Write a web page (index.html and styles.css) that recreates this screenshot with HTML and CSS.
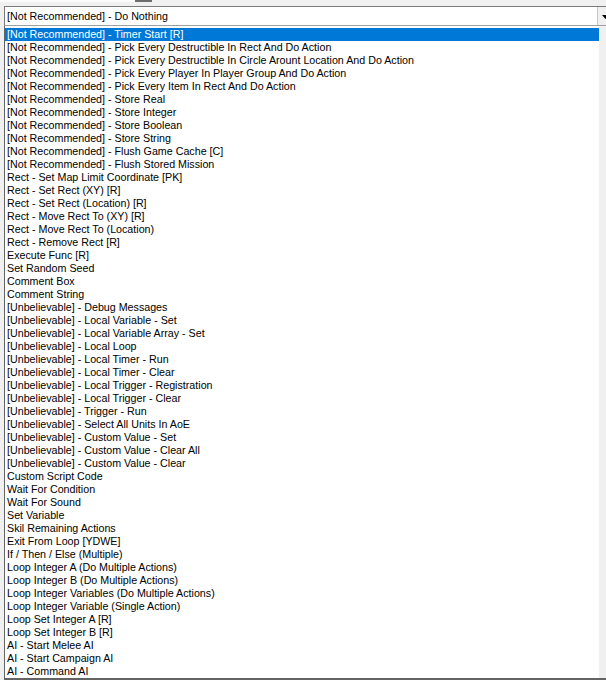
FILE: index.html
```html
<!DOCTYPE html>
<html>
<head>
<meta charset="utf-8">
<link rel="stylesheet" href="styles.css">
</head>
<body>
<div class="topstrip"><div class="strip-light"></div><div class="strip-dark"></div></div>
<div class="frame">
  <div class="combo">
    <div class="combo-text">[Not Recommended] - Do Nothing</div>
    <div class="combo-btn"><svg width="7" height="4" viewBox="0 0 7 4"><path d="M0 0H7L3.5 4Z" fill="#000"/></svg></div>
  </div>
  <div class="listbox">
    <div class="items">
      <div class="item sel">[Not Recommended] - Timer Start [R]</div>
      <div class="item">[Not Recommended] - Pick Every Destructible In Rect And Do Action</div>
      <div class="item">[Not Recommended] - Pick Every Destructible In Circle Arount Location And Do Action</div>
      <div class="item">[Not Recommended] - Pick Every Player In Player Group And Do Action</div>
      <div class="item">[Not Recommended] - Pick Every Item In Rect And Do Action</div>
      <div class="item">[Not Recommended] - Store Real</div>
      <div class="item">[Not Recommended] - Store Integer</div>
      <div class="item">[Not Recommended] - Store Boolean</div>
      <div class="item">[Not Recommended] - Store String</div>
      <div class="item">[Not Recommended] - Flush Game Cache [C]</div>
      <div class="item">[Not Recommended] - Flush Stored Mission</div>
      <div class="item">Rect - Set Map Limit Coordinate [PK]</div>
      <div class="item">Rect - Set Rect (XY) [R]</div>
      <div class="item">Rect - Set Rect (Location) [R]</div>
      <div class="item">Rect - Move Rect To (XY) [R]</div>
      <div class="item">Rect - Move Rect To (Location)</div>
      <div class="item">Rect - Remove Rect [R]</div>
      <div class="item">Execute Func [R]</div>
      <div class="item">Set Random Seed</div>
      <div class="item">Comment Box</div>
      <div class="item">Comment String</div>
      <div class="item">[Unbelievable] - Debug Messages</div>
      <div class="item">[Unbelievable] - Local Variable - Set</div>
      <div class="item">[Unbelievable] - Local Variable Array - Set</div>
      <div class="item">[Unbelievable] - Local Loop</div>
      <div class="item">[Unbelievable] - Local Timer - Run</div>
      <div class="item">[Unbelievable] - Local Timer - Clear</div>
      <div class="item">[Unbelievable] - Local Trigger - Registration</div>
      <div class="item">[Unbelievable] - Local Trigger - Clear</div>
      <div class="item">[Unbelievable] - Trigger - Run</div>
      <div class="item">[Unbelievable] - Select All Units In AoE</div>
      <div class="item">[Unbelievable] - Custom Value - Set</div>
      <div class="item">[Unbelievable] - Custom Value - Clear All</div>
      <div class="item">[Unbelievable] - Custom Value - Clear</div>
      <div class="item">Custom Script Code</div>
      <div class="item">Wait For Condition</div>
      <div class="item">Wait For Sound</div>
      <div class="item">Set Variable</div>
      <div class="item">Skil Remaining Actions</div>
      <div class="item">Exit From Loop [YDWE]</div>
      <div class="item">If / Then / Else (Multiple)</div>
      <div class="item">Loop Integer A (Do Multiple Actions)</div>
      <div class="item">Loop Integer B (Do Multiple Actions)</div>
      <div class="item">Loop Integer Variables (Do Multiple Actions)</div>
      <div class="item">Loop Integer Variable (Single Action)</div>
      <div class="item">Loop Set Integer A [R]</div>
      <div class="item">Loop Set Integer B [R]</div>
      <div class="item">AI - Start Melee AI</div>
      <div class="item">AI - Start Campaign AI</div>
      <div class="item">AI - Command AI</div>
    </div>
    <div class="scrollbar"></div>
  </div>
</div>
</body>
</html>
```

FILE: styles.css
```css
html, body {
  margin: 0;
  padding: 0;
}
body {
  width: 606px;
  height: 680px;
  overflow: hidden;
  background: #f0f0f0;
  font-family: "Liberation Sans", Arial, sans-serif;
  font-size: 10.7px;
  color: #000;
}
.topstrip {
  display: flex;
  height: 2px;
}
.strip-light {
  width: 135px;
  background: #fbfbfb;
}
.strip-dark {
  width: 17px;
  background: #6d6d6d;
}
.frame {
  padding: 4px 0 0 4px;
  width: 620px;
}
.combo {
  display: flex;
  height: 18px;
  border: 1px solid #7a7a7a;
  border-bottom-color: #a0a0a0;
  background: #fff;
  width: 612px;
}
.combo-text {
  width: 590px;
  padding-left: 2px;
  line-height: 19px;
}
.combo-btn {
  width: 17px;
  border-left: 1px solid #c8c8c8;
  background: #f0f0f0;
  display: flex;
  align-items: center;
  padding-left: 4px;
  padding-top: 1px;
  box-sizing: border-box;
}
.combo-btn svg {
  display: block;
}
.listbox {
  display: flex;
  border-left: 1px solid #646464;
  border-bottom: 2px solid #646464;
  background: #fff;
  width: 612px;
}
.items {
  width: 594px;
  padding-top: 2px;
}
.item {
  height: 13px;
  line-height: 13px;
  padding-left: 2px;
  white-space: nowrap;
}
.item.sel {
  background: #0078d7;
  color: #fff;
}
.scrollbar {
  width: 18px;
  background: #f0f0f0;
}
```
